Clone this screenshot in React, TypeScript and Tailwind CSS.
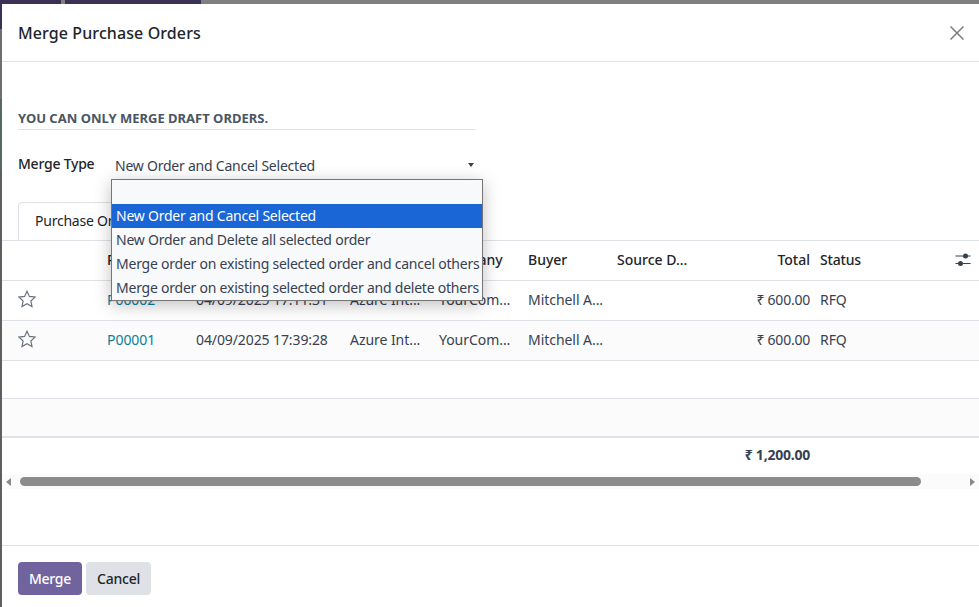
const font = "font-['Noto_Sans','Open_Sans',sans-serif]";

const columns = "grid grid-cols-[89px_89px_154px_89px_89px_89px_89px_104px_1fr] items-center pl-4";

const orders = [
  { ref: "P00002", date: "04/09/2025 17:11:31" },
  { ref: "P00001", date: "04/09/2025 17:39:28" },
];

const mergeTypes = [
  "New Order and Cancel Selected",
  "New Order and Delete all selected order",
  "Merge order on existing selected order and cancel others",
  "Merge order on existing selected order and delete others",
];

function StarIcon() {
  return (
    <svg width="18" height="18" viewBox="0 0 18 18" fill="none" className="text-[#6b7280]">
      <polygon
        points="9,1.2 11.4,6.4 17.1,7.1 12.9,11 14,16.6 9,13.8 4,16.6 5.1,11 0.9,7.1 6.6,6.4"
        stroke="currentColor"
        strokeWidth="1.2"
      />
    </svg>
  );
}

function CloseIcon() {
  return (
    <svg width="14" height="14" viewBox="0 0 14 14" className="text-[#7c7c7c]">
      <path d="M0.5 0.5l13 13M13.5 0.5l-13 13" stroke="currentColor" strokeWidth="1.5" />
    </svg>
  );
}

function SettingsIcon() {
  return (
    <svg width="16" height="14" viewBox="0 0 16 14" className="text-[#374151]">
      <path d="M0.5 3h15M0.5 10.5h15" stroke="currentColor" strokeWidth="1" />
      <circle cx="10.5" cy="3" r="2.5" fill="currentColor" />
      <circle cx="5.5" cy="10.5" r="2.5" fill="currentColor" />
    </svg>
  );
}

export default function App() {
  return (
    <main className={`${font} flex h-[607px] w-[979px] flex-col overflow-hidden bg-[#7f7f7f] text-[14px] tracking-[-0.23px] text-[#374151]`}>
      <div className="flex h-1 shrink-0">
        <div className="w-[61px] bg-[#3b3056]" />
        <div className="w-[4px] bg-[#7f7f7f]" />
        <div className="w-[136px] bg-[#3b3056]" />
      </div>

      <div className="flex min-h-0 flex-1">
        <div className="flex w-0.5 shrink-0 flex-col bg-[#5f5f5f]">
          <div className="h-[25px] bg-[#3b3056]" />
          <div className="h-[70px] bg-[#6f6f6f]" />
          <div className="h-[72px] bg-[#566866]" />
        </div>

        <div className="relative flex min-w-0 flex-1 flex-col bg-white">
          <header className="flex h-[58px] shrink-0 items-center justify-between border-b border-[#dee2e6] pl-4 pr-[15px]">
            <h1 className="text-[16px] font-medium tracking-[0.1px] text-[#212529]">Merge Purchase Orders</h1>
            <CloseIcon />
          </header>

          <section className="pl-4 pt-[49px]">
            <h2 className="h-[19px] w-[457px] border-b border-[#dee2e6] text-[13px] leading-[15px] font-bold tracking-normal uppercase text-[#4b5563]">
              You can only merge draft orders.
            </h2>
            <div className="mt-6 flex w-[457px] items-start">
              <span className="w-[97px] leading-[20px] font-medium text-[#212529]">Merge Type</span>
              <div className="flex h-[26px] flex-1 items-center justify-between border-b border-[#71639e] pb-[3px] pr-px">
                <span>New Order and Cancel Selected</span>
                <span className="h-0 w-0 border-x-[3.5px] border-t-[4px] border-x-transparent border-t-[#374151]" />
              </div>
            </div>
          </section>

          <div className="mt-[22px] h-[38px] pl-4">
            <div className="h-[38px] w-[140px] rounded-t border border-b-0 border-[#dee2e6] bg-white py-[7px] pl-[16px] text-[#212529]">
              Purchase Orders
            </div>
          </div>

          <div className="border-t border-[#dee2e6]">
            <div className={`${columns} h-10 border-b border-[#dee2e6] pb-[2px] font-medium tracking-normal text-[#212529]`}>
              <span />
              <span>Reference</span>
              <span />
              <span />
              <span>Company</span>
              <span>Buyer</span>
              <span>Source D...</span>
              <span className="text-right">Total</span>
              <div className="flex items-center justify-between pl-[10px] pr-2">
                <span className="tracking-[-0.2px]">Status</span>
                <SettingsIcon />
              </div>
            </div>

            {orders.map((order, i) => (
              <div key={order.ref} className={`${columns} h-10 border-b border-[#dee2e6] pb-[3px] tracking-[-0.05px] ${i === 1 ? "bg-[#fbfbfb]" : ""}`}>
                <StarIcon />
                <span className="text-[#0b7f96]">{order.ref}</span>
                <span className="tracking-[-0.1px]">{order.date}</span>
                <span>Azure Int...</span>
                <span>YourCom...</span>
                <span>Mitchell A...</span>
                <span />
                <span className="text-right tracking-[-0.23px]">₹ 600.00</span>
                <span className="pl-[10px]">RFQ</span>
              </div>
            ))}

            <div className="h-[38px] border-b border-[#dee2e6]" />
            <div className="h-[39px] border-b-2 border-[#dee2e6] bg-[#fbfbfb]" />

            <div className={`${columns} h-9 pb-[3px]`}>
              <span className="col-start-8 text-right font-bold">₹ 1,200.00</span>
            </div>

            <div className="flex h-[15px] items-center bg-[#fbfbfb] px-1">
              <span className="h-0 w-0 border-y-[4.5px] border-r-[5px] border-y-transparent border-r-[#8a8a8a]" />
              <span className="ml-[9px] h-[9px] w-[901px] rounded-full bg-[#8c8c8c]" />
              <span className="ml-auto h-0 w-0 border-y-[4.5px] border-l-[5px] border-y-transparent border-l-[#8a8a8a]" />
            </div>
          </div>

          <footer className="mt-auto flex h-[62px] shrink-0 gap-1 border-t border-[#dee2e6] pl-4 pt-4">
            <button type="button" className="h-[33px] w-16 rounded bg-[#71639e] font-medium text-white">Merge</button>
            <button type="button" className="h-[33px] w-[65px] rounded bg-[#dee2e6] font-medium text-[#212529]">Cancel</button>
          </footer>

          {/* native select popup */}
          <div className="absolute left-[109px] top-[175px] w-[372px] border border-[#767676] bg-[#f8f9fa] shadow-[0_4px_16px_rgba(0,0,0,0.25)]">
            <div className="h-6" />
            {mergeTypes.map((type, i) => (
              <div
                key={type}
                className={`h-6 whitespace-nowrap pl-1 leading-6 ${i === 0 ? "bg-[#1a66d6] text-white" : "text-[#374151]"}`}
              >
                {type}
              </div>
            ))}
          </div>
        </div>
      </div>
    </main>
  );
}
